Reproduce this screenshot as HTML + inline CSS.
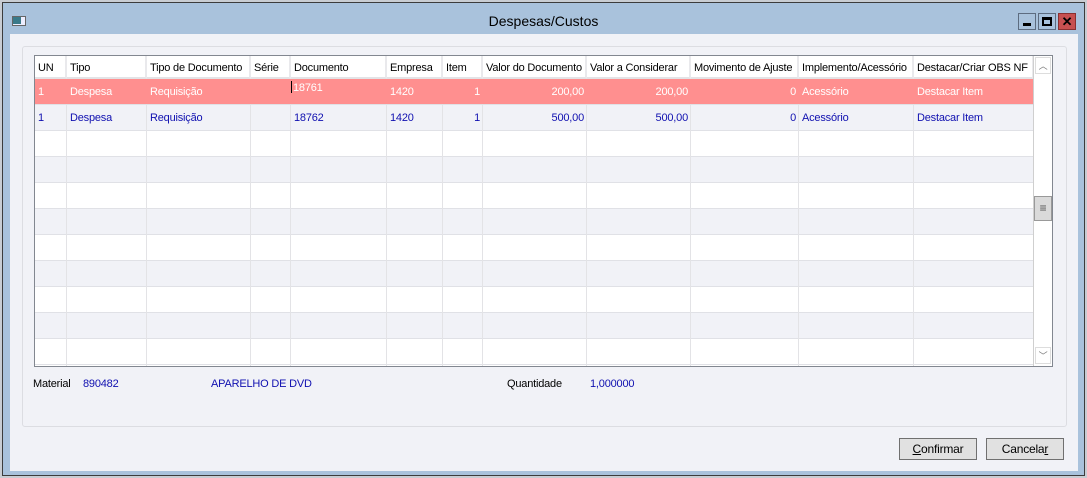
<!DOCTYPE html><html><head><style>
*{margin:0;padding:0;box-sizing:border-box}
body{width:1087px;height:478px;background:#c9cdd3;position:relative;overflow:hidden;font-family:"Liberation Sans",sans-serif;font-size:11px;letter-spacing:-0.2px}
.win{position:absolute;left:2px;top:2px;width:1083px;height:474px;background:#a9c2dc;border:1px solid #3c3c3c}
.title{position:absolute;left:0;top:10px;width:100%;text-align:center;font-size:14px;color:#000;letter-spacing:0}
.content{position:absolute;left:7px;top:31px;width:1068px;height:437px;background:#f1f2f7}
.group{position:absolute;left:12px;top:12px;width:1045px;height:381px;border:1px solid #dcdde2;border-radius:3px}
.grid{position:absolute;left:34px;top:55px;width:1019px;height:312px;border:1px solid #828790;background:#fff;overflow:hidden}
.col{position:absolute;top:0;height:100%;border-left:1px solid #e3e3e6}
.hdr{position:absolute;top:0;height:23px;line-height:24px;padding-left:3px;color:#000;background:#fff;border-bottom:2px solid #e3e3e6;white-space:nowrap;border-right:2px solid #e9e9ec;overflow:hidden}
.row{position:absolute;left:0;width:998px;height:26px;border-bottom:1px solid #e0e1e6}
.c{position:absolute;top:1px;line-height:25px;padding:0 3px;white-space:nowrap}
.r{text-align:right}
.sb{position:absolute;left:998px;top:0;width:19px;height:310px;background:#fff;border-left:1px solid #cfcfcf}
.btn{position:absolute;top:438px;width:78px;height:22px;border:1px solid #707070;background:#e1e1e1;text-align:center;line-height:20px;font-size:12px}
.lbl{position:absolute;top:378px;font-size:11px}
.ic{position:absolute;top:10px;width:18px;height:17px;border:1px solid #5d6c80;background:#a9c2dc}
</style></head><body>
<div class="win">
<div style="position:absolute;left:9px;top:13px;width:14px;height:10px;background:#eef;border:1px solid #666"><div style="width:8px;height:7px;background:#3a7a8a"></div></div>
<div class="title">Despesas/Custos</div>
<div class="ic" style="left:1015px"><div style="position:absolute;left:4px;top:9px;width:8px;height:3px;background:#000"></div></div>
<div class="ic" style="left:1035px"><div style="position:absolute;left:3px;top:3px;width:10px;height:9px;border:2px solid #000;border-top-width:3px"></div></div>
<div class="ic" style="left:1055px;background:#c75050;border-color:#8a3030;color:#000;font-weight:bold;font-size:13px;text-align:center;line-height:15px">✕</div>
<div class="content"><div class="group"></div></div>
</div>
<div class="grid">
<div class="row" style="top:23px;background:#ff8f8f;color:#fff;height:26px">
<span class="c" style="left:0">1</span><span class="c" style="left:32px">Despesa</span><span class="c" style="left:112px">Requisição</span><span class="c" style="left:256px;line-height:14px;border-left:1px solid #000;padding-left:1px;height:12px;top:2px">18761</span><span class="c" style="left:352px">1420</span><span class="c r" style="left:408px;width:40px">1</span><span class="c r" style="left:448px;width:104px">200,00</span><span class="c r" style="left:552px;width:104px">200,00</span><span class="c r" style="left:656px;width:108px">0</span><span class="c" style="left:764px">Acessório</span><span class="c" style="left:879px">Destacar Item</span></div>
<div class="row" style="top:49px;background:#f1f2f7;color:#1010b0">
<span class="c" style="left:0">1</span><span class="c" style="left:32px">Despesa</span><span class="c" style="left:112px">Requisição</span><span class="c" style="left:256px">18762</span><span class="c" style="left:352px">1420</span><span class="c r" style="left:408px;width:40px">1</span><span class="c r" style="left:448px;width:104px">500,00</span><span class="c r" style="left:552px;width:104px">500,00</span><span class="c r" style="left:656px;width:108px">0</span><span class="c" style="left:764px">Acessório</span><span class="c" style="left:879px">Destacar Item</span></div>
<div class="row" style="top:75px;background:#fff"></div>
<div class="row" style="top:101px;background:#f1f2f7"></div>
<div class="row" style="top:127px;background:#fff"></div>
<div class="row" style="top:153px;background:#f1f2f7"></div>
<div class="row" style="top:179px;background:#fff"></div>
<div class="row" style="top:205px;background:#f1f2f7"></div>
<div class="row" style="top:231px;background:#fff"></div>
<div class="row" style="top:257px;background:#f1f2f7"></div>
<div class="row" style="top:283px;background:#fff"></div>
<div class="col" style="left:31px;top:49px"></div><div class="col" style="left:111px;top:49px"></div><div class="col" style="left:215px;top:49px"></div><div class="col" style="left:255px;top:49px"></div><div class="col" style="left:351px;top:49px"></div><div class="col" style="left:407px;top:49px"></div><div class="col" style="left:447px;top:49px"></div><div class="col" style="left:551px;top:49px"></div><div class="col" style="left:655px;top:49px"></div><div class="col" style="left:763px;top:49px"></div><div class="col" style="left:878px;top:49px"></div>
<div class="hdr" style="left:0;width:32px">UN</div><div class="hdr" style="left:32px;width:80px">Tipo</div><div class="hdr" style="left:112px;width:104px">Tipo de Documento</div><div class="hdr" style="left:216px;width:40px">Série</div><div class="hdr" style="left:256px;width:96px">Documento</div><div class="hdr" style="left:352px;width:56px">Empresa</div><div class="hdr" style="left:408px;width:40px">Item</div><div class="hdr" style="left:448px;width:104px">Valor do Documento</div><div class="hdr" style="left:552px;width:104px">Valor a Considerar</div><div class="hdr" style="left:656px;width:108px">Movimento de Ajuste</div><div class="hdr" style="left:764px;width:115px">Implemento/Acessório</div><div class="hdr" style="left:879px;width:120px">Destacar/Criar OBS NF</div>
<div class="sb"><div style="position:absolute;left:1px;top:1px;width:16px;height:17px;border:1px solid #ddd;text-align:center;color:#777;font-size:9px;line-height:16px">︿</div><div style="position:absolute;left:0;top:140px;width:18px;height:25px;background:#dadada;border:1px solid #999;text-align:center;line-height:22px;color:#555;font-size:12px">≡</div><div style="position:absolute;left:1px;top:291px;width:16px;height:17px;border:1px solid #ddd;text-align:center;color:#777;font-size:9px;line-height:16px">﹀</div></div>
</div>
<span class="lbl" style="left:33px">Material</span><span class="lbl" style="left:83px;color:#1010b0">890482</span><span class="lbl" style="left:211px;color:#1010b0">APARELHO DE DVD</span><span class="lbl" style="left:507px">Quantidade</span><span class="lbl" style="left:590px;color:#1010b0">1,000000</span>
<div class="btn" style="left:899px"><u>C</u>onfirmar</div>
<div class="btn" style="left:986px">Cancela<u>r</u></div>
</body></html>
